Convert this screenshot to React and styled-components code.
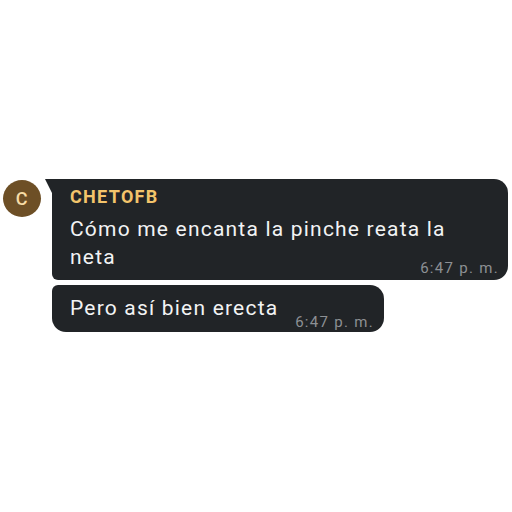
import React from 'react';
import styled, { createGlobalStyle } from 'styled-components';

const GlobalStyle = createGlobalStyle`
  html, body {
    margin: 0;
    padding: 0;
    background: #ffffff;
  }
  body {
    font-family: Roboto, "Liberation Sans", sans-serif;
  }
`;

// Page
const Page = styled.div`
  width: 512px;
  height: 512px;
  padding-top: 179px;
  box-sizing: border-box;
`;

// Message group (avatar + bubbles)
const Group = styled.div`
  display: flex;
  align-items: flex-start;
  padding-left: 3px;
`;

const Avatar = styled.div`
  flex: 0 0 38px;
  height: 37px;
  margin-top: 1px;
  border-radius: 50%;
  background-color: #6d4f26;
  color: #f7dca6;
  display: flex;
  align-items: center;
  justify-content: center;
  font-size: 18px;
  font-weight: 500;
  letter-spacing: 0.5px;
`;

const Bubbles = styled.div`
  display: flex;
  flex-direction: column;
  gap: 5px;
  margin-left: 11px;
`;

const Bubble = styled.div`
  position: relative;
  box-sizing: border-box;
  width: ${props => props.width}px;
  background-color: #212427;
  border-radius: ${props => (props.first ? '0 14px 14px 6px' : '6px 14px 14px 14px')};
  padding: ${props => (props.first ? '7px 10px 9px 18px' : '9px 10px 10px 18px')};

  ${props => props.first && `
    &::before {
      content: '';
      position: absolute;
      left: -7px;
      top: 0;
      width: 8px;
      height: 16px;
      background-color: #212427;
      clip-path: polygon(0 0, 100% 0, 100% 100%);
    }
  `}
`;

const Name = styled.div`
  color: #f3c46b;
  font-size: 18px;
  font-weight: 700;
  letter-spacing: 1.3px;
  line-height: 22px;
  margin-bottom: 7px;
`;

const Text = styled.div`
  color: #f2f3f4;
  font-size: 21px;
  letter-spacing: 1.2px;
  line-height: 28px;
  max-width: ${props => props.max}px;
`;

const Time = styled.span`
  position: absolute;
  right: ${props => props.right}px;
  bottom: ${props => props.bottom}px;
  color: #8d9094;
  font-size: 15px;
  letter-spacing: 1.3px;
  line-height: 18px;
`;

const App = () => {
  return (
    <Page>
      <GlobalStyle />
      <Group>
        <Avatar>C</Avatar>
        <Bubbles>
          <Bubble first width={456}>
            <Name>CHETOFB</Name>
            <Text max={400}>Cómo me encanta la pinche reata la neta</Text>
            <Time right={9} bottom={3}>6:47 p. m.</Time>
          </Bubble>
          <Bubble width={332}>
            <Text max={230}>Pero así bien erecta</Text>
            <Time right={10} bottom={1}>6:47 p. m.</Time>
          </Bubble>
        </Bubbles>
      </Group>
    </Page>
  );
};

export default App;
